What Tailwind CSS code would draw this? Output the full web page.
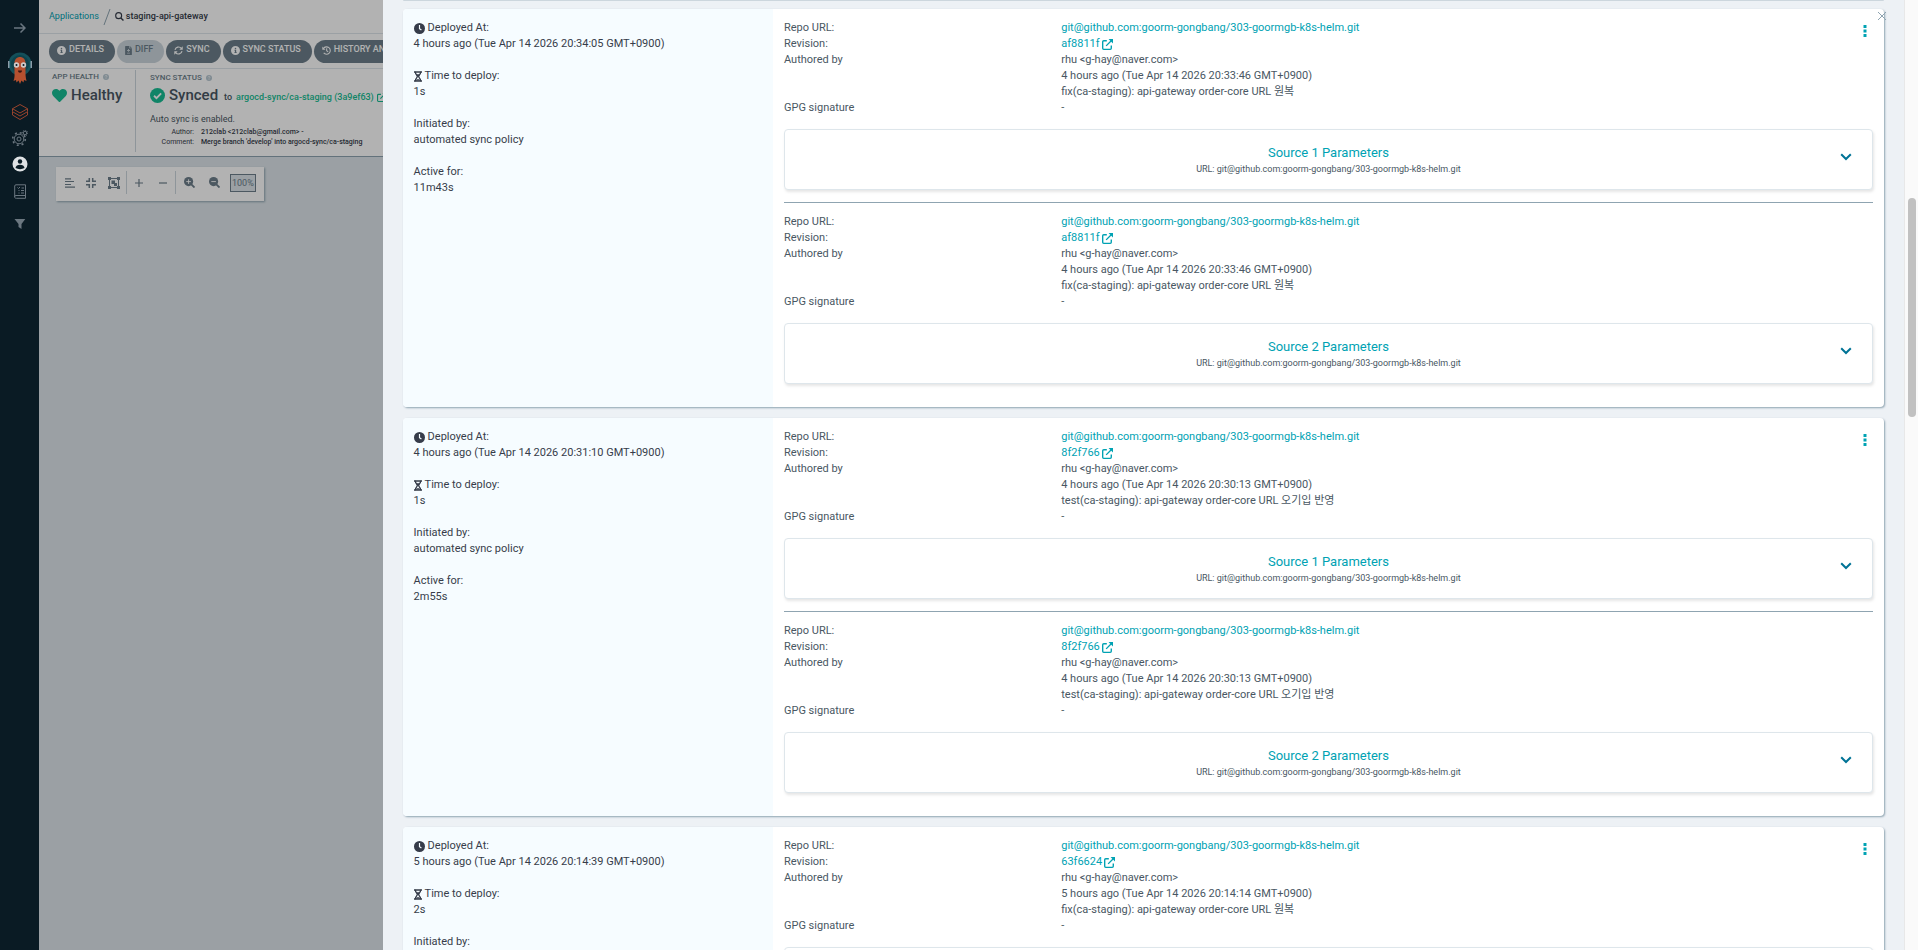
<!DOCTYPE html>
<html lang="en">

<head>
    <meta charset="UTF-8">
    <meta name="viewport" content="width=device-width, initial-scale=1.0">
    <title>staging-api-gateway - Argo CD</title>

    <script src="https://cdn.jsdelivr.net/npm/@tailwindcss/browser@4"></script>
</head>

<body class="h-screen overflow-hidden font-[Roboto,'Noto_Sans_CJK_KR',sans-serif] text-[#363c4a]">
    <!-- icon set -->
    <svg class="hidden" xmlns="http://www.w3.org/2000/svg">
        <symbol id="i-info" viewBox="0 0 16 16">
            <path fill="currentColor" fill-rule="evenodd" d="M8 0a8 8 0 100 16A8 8 0 008 0zm0 3a1.4 1.4 0 110 2.800A1.400 1.400 0 018 3zM6.200 6.800h3v4h.8v1.500H6.200v-1.500H7V8.300h-.8z" />
        </symbol>
        <symbol id="i-help" viewBox="0 0 16 16">
            <circle cx="8" cy="8" r="8" fill="currentColor" />
            <path d="M5.500 6.300C5.700 3.200 10.600 3.200 10.500 6.200 10.500 7.800 8 7.800 8 9.700M8 11v2" fill="none" stroke="#fff" stroke-width="1.800" />
        </symbol>
        <symbol id="i-diff" viewBox="0 0 12 16">
            <path fill="currentColor" fill-rule="evenodd" d="M1 0h6v4h5v11a1 1 0 01-1 1H1a1 1 0 01-1-1V1a1 1 0 011-1zM8 0l4 3H8zM5.200 5.500v1.700H3.500v1.500h1.700v1.700h1.600V8.700h1.700V7.200H6.800V5.500zM3.500 12v1.400h5V12z" />
        </symbol>
        <symbol id="i-sync" viewBox="0 0 16 16">
            <path d="M1.800 7A6.300 6.300 0 0113 4.200M14.200 9A6.300 6.300 0 013 11.800" fill="none" stroke="currentColor" stroke-width="2" />
            <path d="M15.500.5v6h-6zM.5 15.500v-6h6z" fill="currentColor" />
        </symbol>
        <symbol id="i-history" viewBox="0 0 16 16">
            <path d="M2.600 4.500A6.600 6.600 0 113 12.300M8.300 4.200v4.200l2.700 2" fill="none" stroke="currentColor" stroke-width="1.900" />
            <path d="M.5 1v5.700h5.700z" fill="currentColor" />
        </symbol>
        <symbol id="i-search" viewBox="0 0 16 16">
            <path d="M10.500 10.500L15 15" fill="none" stroke="currentColor" stroke-width="2.400" />
            <circle cx="6.500" cy="6.500" r="5.300" fill="none" stroke="currentColor" stroke-width="2" />
        </symbol>
        <symbol id="i-heart" viewBox="0 0 512 512">
            <path fill="currentColor" d="M462.300 62.600C407.500 15.900 326 24.300 275.700 76.200L256 96.500l-19.700-20.300C186.100 24.300 104.500 15.900 49.700 62.600c-62.800 53.600-66.100 149.800-9.900 207.900l193.500 199.800c12.500 12.900 32.800 12.900 45.300 0l193.500-199.800c56.300-58.100 53-154.300-9.800-207.900z" />
        </symbol>
        <symbol id="i-check" viewBox="0 0 16 16">
            <circle cx="8" cy="8" r="8" fill="currentColor" />
            <path d="M4.300 8.300l2.600 2.500 5-5" fill="none" stroke="#fff" stroke-width="2" />
        </symbol>
        <symbol id="i-external" viewBox="0 0 16 16">
            <path d="M7 2.500H2.500A1.500 1.500 0 001 4v9.500A1.500 1.500 0 002.500 15H12a1.500 1.500 0 001.500-1.500V9.500M6 10l7.500-7.500" fill="none" stroke="currentColor" stroke-width="2" />
            <path d="M9.500 0H16v6.500z" fill="currentColor" />
        </symbol>
        <symbol id="i-clock" viewBox="0 0 16 16">
            <circle cx="8" cy="8" r="8" fill="currentColor" />
            <path d="M8 3v5.300l2.800 2" fill="none" stroke="#f6fcff" stroke-width="1.700" />
        </symbol>
        <symbol id="i-hourglass" viewBox="0 0 12 16">
            <path d="M0 1.200h12M0 14.800h12" stroke="currentColor" stroke-width="2.400" />
            <path d="M2 1c0 4.500 3 5 3 7s-3 2.500-3 7M10 1c0 4.500-3 5-3 7s3 2.500 3 7" fill="none" stroke="currentColor" stroke-width="2" />
            <path d="M3 4.500h6L6 9zM3 14c0-2.500 6-2.500 6 0z" fill="currentColor" />
        </symbol>
        <symbol id="i-kebab" viewBox="0 0 4 12">
            <path fill="currentColor" d="M.5 0h3v3h-3zM.5 4.500h3v3h-3zM.5 9h3v3h-3z" />
        </symbol>
        <symbol id="i-chevron" viewBox="0 0 12 8">
            <path d="M1.200 1.200L6 6l4.800-4.800" fill="none" stroke="currentColor" stroke-width="2" />
        </symbol>
    </svg>

    <div class="flex h-full">
        <nav class="flex w-[39px] shrink-0 flex-col items-center bg-[#0a1b24] pt-5 text-[#6b7780]">
            <button aria-label="Expand" class="flex h-4 items-center">
                <svg class="h-3 w-3" viewBox="0 0 12 12" fill="none" stroke="currentColor" stroke-width="1.500"><path d="M0 6h11M6.500 1.500L11 6l-4.500 4.500" /></svg>
            </button>
            <svg class="mt-4 h-8 w-6" viewBox="0 0 24 32">
                <circle cx="12" cy="12" r="11.500" fill="#14505a" />
                <circle cx="12" cy="12" r="9" fill="#0d434d" />
                <path d="M0 9h1.500v7H0zM22.500 9H24v7h-1.500z" fill="#8b9da9" />
                <path d="M6.500 11c0-8 11-8 11 0v8c0 4 0 6 1 10l-2.500-1-.5 2.500-2-2-1.500 3.500-1.500-3.500-2 2-.5-2.500-2.500 1c1.500-4 1-6 1-10z" fill="#b5502f" />
                <circle cx="8.500" cy="13" r="2.700" fill="#d0cccb" />
                <circle cx="15.500" cy="13" r="2.700" fill="#d0cccb" />
                <circle cx="8.500" cy="13" r="1" fill="#0a1b24" />
                <circle cx="15.500" cy="13" r="1" fill="#0a1b24" />
                <path d="M10 18.500h4c0 3-4 3-4 0z" fill="#3b1511" />
            </svg>
            <a href="#" aria-label="Applications" class="mt-5">
                <svg class="h-4 w-4" viewBox="0 0 16 16" fill="none" stroke="#99442d" stroke-width="1"><path d="M8 .5l7.500 4.200L8 9 .5 4.700zM.5 4.700v3L8 12l7.500-4.300v-3M.5 8v3L8 15.500l7.500-4.500V8" /></svg>
            </a>
            <a href="#" aria-label="Settings" class="mt-2.5">
                <svg class="h-4 w-4" viewBox="0 0 16 16" fill="none" stroke="currentColor">
                    <circle cx="7" cy="9" r="4.800" />
                    <circle cx="7" cy="9" r="6.300" stroke-width="1.600" stroke-dasharray="2 2.950" />
                    <circle cx="7" cy="9" r="2" />
                    <circle cx="13" cy="3" r="1.800" />
                    <circle cx="13" cy="3" r="2.700" stroke-width="1" stroke-dasharray="1 1.100" />
                </svg>
            </a>
            <a href="#" aria-label="User info" class="mt-2.5">
                <svg class="h-4 w-4" viewBox="0 0 16 16">
                    <circle cx="8" cy="8" r="7.500" fill="#dfe2e4" />
                    <circle cx="8" cy="5.500" r="2.200" fill="#0a1b24" />
                    <path d="M3.500 12c0-4.500 9-4.500 9 0-2.500 1.500-6.500 1.500-9 0z" fill="#0a1b24" />
                </svg>
            </a>
            <a href="#" aria-label="Documentation" class="mt-3">
                <svg class="h-4 w-4" viewBox="0 0 16 16" fill="none" stroke="currentColor"><path d="M4 .8h9.500v13.500H4.300C2 14.300 2 11.500 4 11.500h9.500M2.700 13V2C2.700 1.300 3.200.8 4 .8M5.500 3.500l1 1 1.500-1.500M9.500 4h2.500M6.500 6.500h1M9 6.500h3M9 9h3M6.500 9h1" /></svg>
            </a>
            <button aria-label="Filters" class="mt-4">
                <svg class="h-4 w-3" viewBox="0 0 12 14" fill="currentColor"><path d="M.5 2h10.800L7.500 7v5L4.500 10V7z" /></svg>
            </button>
        </nav>

        <main class="flex min-w-0 flex-1 flex-col bg-[#dee6eb]">
            <header class="flex h-[34px] shrink-0 items-center border-b border-[#dee6eb] bg-white px-2.5 text-[9px]">
                <a href="#" class="text-[#00a2b3]">Applications</a>
                <svg class="ml-1 h-4 w-2" viewBox="0 0 8 16" stroke="#8fa4b1"><path d="M1 16L7 0" /></svg>
                <svg class="mr-0.5 ml-1 h-[9px] w-[9px]"><use href="#i-search" /></svg>
                <span class="font-medium">staging-api-gateway</span>
            </header>
            <div class="flex h-[35px] shrink-0 items-center gap-0.5 overflow-hidden border-b border-[#dee6eb] bg-white px-2.5 text-[9px] font-medium whitespace-nowrap text-white">
                <button class="flex h-[23px] shrink-0 items-center gap-[3px] rounded-full bg-[#6d7f8b] pr-[11px] pb-0.5 pl-2"><svg class="h-[9px] w-[9px]"><use href="#i-info" /></svg>DETAILS</button>
                <button class="flex h-[23px] shrink-0 items-center gap-[3px] rounded-full bg-[#ccd6dd] pr-[11px] pb-0.5 pl-2 text-[#6d7f8b]" disabled><svg class="h-[9px] w-[7px]"><use href="#i-diff" /></svg>DIFF</button>
                <button class="flex h-[23px] shrink-0 items-center gap-[3px] rounded-full bg-[#6d7f8b] pr-[11px] pb-0.5 pl-2"><svg class="h-[9px] w-[9px]"><use href="#i-sync" /></svg>SYNC</button>
                <button class="flex h-[23px] shrink-0 items-center gap-[3px] rounded-full bg-[#6d7f8b] pr-[11px] pb-0.5 pl-2"><svg class="h-[9px] w-[9px]"><use href="#i-info" /></svg>SYNC STATUS</button>
                <button class="flex h-[23px] shrink-0 items-center gap-[3px] rounded-full bg-[#6d7f8b] pr-[11px] pb-0.5 pl-2"><svg class="h-[9px] w-[9px]"><use href="#i-history" /></svg>HISTORY AND ROLLBACK</button>
            </div>
            <section class="flex h-[88px] shrink-0 border-b border-[#8fa4b1] bg-white px-[13px] pt-px pb-1 text-[#363c4a]">
                <div class="w-[84px] shrink-0 border-r border-[#ccd6dd] pt-0.5">
                    <h2 class="flex items-center gap-1 text-[8px]/[10px] font-medium text-[#6d7f8b]">APP HEALTH <svg class="h-1.5 w-1.5 text-[#b7c7d1]"><use href="#i-help" /></svg></h2>
                    <p class="mt-1 flex items-center gap-1 text-[15px]/[18px] font-medium text-[#495763]"><svg class="h-[15px] w-[15px] text-[#18be94]"><use href="#i-heart" /></svg>Healthy</p>
                </div>
                <div class="pt-[3px] pl-3.5 whitespace-nowrap">
                    <h2 class="flex items-center gap-1 text-[8px]/[10px] font-medium text-[#6d7f8b]">SYNC STATUS <svg class="h-1.5 w-1.5 text-[#b7c7d1]"><use href="#i-help" /></svg></h2>
                    <p class="mt-[3px] flex items-center gap-1 text-[15px]/[18px] font-medium text-[#495763]">
                        <svg class="h-[15px] w-[15px] text-[#18be94]"><use href="#i-check" /></svg>Synced
                        <span class="flex items-center gap-1 pt-1 pl-0.5 text-[9px]/[14px]">to <a href="#" class="flex items-center gap-[3px] text-[#18be94]">argocd-sync/ca-staging (3a9ef63) <svg class="h-[9px] w-[9px]"><use href="#i-external" /></svg></a></span>
                    </p>
                    <p class="mt-2 text-[9px]/[14px] text-[#495763]">Auto sync is enabled.</p>
                    <dl class="mt-px grid grid-cols-[44px_auto] gap-x-[7px] text-[7px]/[10px] text-[#363c4a]">
                        <dt class="text-right">Author:</dt>
                        <dd class="font-medium">212clab &lt;212clab@gmail.com&gt; -</dd>
                        <dt class="text-right">Comment:</dt>
                        <dd class="font-medium">Merge branch 'develop' into argocd-sync/ca-staging</dd>
                    </dl>
                </div>
            </section>
            <div class="mt-2.5 ml-[17px] flex h-[34px] w-fit items-center bg-white px-2 pb-[3px] text-[#6d7f8b] shadow-[1px_1px_2px_#8fa4b1]">
                <button aria-label="Align" class="px-px"><svg class="h-2.5 w-2.5" viewBox="0 0 10 10" stroke="currentColor" stroke-width="1.200"><path d="M0 .8h6M0 3.500h9M0 6.500h6M0 9.200h10" /></svg></button>
                <button aria-label="Compact" class="ml-2.5"><svg class="h-2.5 w-2.5" viewBox="0 0 10 10" fill="none" stroke="currentColor" stroke-width="1.500"><path d="M0 3.300h3.300V0M10 3.300H6.700V0M0 6.700h3.300V10M10 6.700H6.700V10" /></svg></button>
                <button aria-label="Group" class="ml-3"><svg class="h-3 w-3" viewBox="0 0 12 12" fill="none" stroke="currentColor"><path d="M1.500 1.500h9v9h-9z" /><path d="M0 0h3v3H0zM9 0h3v3H9zM0 9h3v3H0zM9 9h3v3H9zM3.500 3.500h3.500V7H3.500zM6 6h3v3H6z" fill="currentColor" stroke="none" /></svg></button>
                <span class="mr-2 ml-1.5 h-[23px] w-px bg-[#ccd6dd]"></span>
                <button aria-label="Zoom in" class="mr-4"><svg class="h-2 w-2" viewBox="0 0 8 8" stroke="currentColor" stroke-width="1.200"><path d="M0 4h8M4 0v8" /></svg></button>
                <button aria-label="Zoom out"><svg class="h-2 w-2" viewBox="0 0 8 8" stroke="currentColor" stroke-width="1.200"><path d="M0 4h8" /></svg></button>
                <span class="mx-2 h-[23px] w-px bg-[#ccd6dd]"></span>
                <button aria-label="Enlarge" class="mr-3.5"><svg class="h-[11px] w-[11px]" viewBox="0 0 12 12"><path d="M7.500 7.500L11.500 11.500" stroke="currentColor" stroke-width="2" /><circle cx="5" cy="5" r="5" fill="currentColor" /><path d="M5 2.500v5M2.500 5h5" stroke="#fff" /></svg></button>
                <button aria-label="Shrink" class="mr-2.5"><svg class="h-[11px] w-[11px]" viewBox="0 0 12 12"><path d="M7.500 7.500L11.500 11.500" stroke="currentColor" stroke-width="2" /><circle cx="5" cy="5" r="5" fill="currentColor" /><path d="M2.500 5h5" stroke="#fff" /></svg></button>
                <span class="border border-[#6d7f8b] bg-[#dee6eb] px-px text-[9px]/[16px]">100%</span>
            </div>
        </main>
    </div>

    <!-- dimmed page behind the sliding panel -->
    <div class="absolute inset-y-0 right-0 left-[39px] bg-black/30"></div>

    <aside class="absolute inset-y-0 right-0 flex w-[calc(80%+1px)] bg-[#edf1f5]">
        <div class="min-w-0 flex-1 overflow-hidden px-5">
            <div class="mb-2 h-px rounded-b bg-[#ccd6dd]"></div>
            <div id="history" class="flex flex-col gap-[11px]"></div>
        </div>
        <button aria-label="Close" class="absolute top-3 right-8 text-[#8fa4b1]">
            <svg class="h-2 w-2" viewBox="0 0 8 8" stroke="currentColor"><path d="M0 0l8 8M8 0L0 8" /></svg>
        </button>
        <div class="flex w-3.5 shrink-0 justify-center border-l border-[#e8e8e8] bg-[#fafafa] pt-[198px]">
            <div class="h-[219px] w-2 rounded-full bg-[#c1c1c1]"></div>
        </div>
    </aside>

    <script type="text/javascript">
        const REPO = "git@github.com:goorm-gongbang/303-goormgb-k8s-helm.git";

        const deployments = [
            { at: "4 hours ago (Tue Apr 14 2026 20:34:05 GMT+0900)", took: "1s", active: "11m43s", rev: "af8811f", date: "4 hours ago (Tue Apr 14 2026 20:33:46 GMT+0900)", msg: "fix(ca-staging): api-gateway order-core URL 원복" },
            { at: "4 hours ago (Tue Apr 14 2026 20:31:10 GMT+0900)", took: "1s", active: "2m55s", rev: "8f2f766", date: "4 hours ago (Tue Apr 14 2026 20:30:13 GMT+0900)", msg: "test(ca-staging): api-gateway order-core URL 오기입 반영" },
            { at: "5 hours ago (Tue Apr 14 2026 20:14:39 GMT+0900)", took: "2s", active: "16m31s", rev: "63f6624", date: "5 hours ago (Tue Apr 14 2026 20:14:14 GMT+0900)", msg: "fix(ca-staging): api-gateway order-core URL 원복" },
        ];

        function source(d, n) {
            return `
                <dl class="grid grid-cols-[25%_1fr] gap-x-[5px] text-[#495763]">
                    <dt>Repo URL:</dt>
                    <dd><a href="#" class="text-[#00a2b3]">${REPO}</a></dd>
                    <dt>Revision:</dt>
                    <dd><a href="#" class="flex items-center gap-0.5 text-[#00a2b3]">${d.rev} <svg class="h-[11px] w-[11px]"><use href="#i-external" /></svg></a></dd>
                    <dt>Authored by</dt>
                    <dd>rhu &lt;g-hay@naver.com&gt;<br>${d.date}<br>${d.msg}</dd>
                    <dt>GPG signature</dt>
                    <dd>-</dd>
                </dl>
                <button class="mt-[13px] flex h-[61px] w-full items-center rounded-sm border border-[#dee6eb] bg-white px-5 shadow-[1px_2px_3px_rgba(0,0,0,0.1)]">
                    <span class="flex-1 pl-3">
                        <span class="block text-[13px]/[18px] text-[#00a2b3]">Source ${n} Parameters</span>
                        <span class="block text-[9px]/[14px] text-[#495763]">URL: ${REPO}</span>
                    </span>
                    <svg class="mb-1.5 h-2 w-3 text-[#007396]"><use href="#i-chevron" /></svg>
                </button>`;
        }

        document.getElementById("history").innerHTML = deployments.map((d) => `
            <article class="relative flex shrink-0 overflow-hidden rounded bg-white text-[11px]/[16px] shadow-[1px_1px_2px_#8fa4b1]">
                <div class="w-1/4 bg-[#f6fcff] px-[11px] pt-[11px]">
                    <p class="flex items-center gap-[3px]"><svg class="h-[11px] w-[11px]"><use href="#i-clock" /></svg>Deployed At:</p>
                    <p>${d.at}</p>
                    <p class="mt-4 flex items-center gap-[3px]"><svg class="h-[11px] w-2"><use href="#i-hourglass" /></svg>Time to deploy:</p>
                    <p>${d.took}</p>
                    <p class="mt-4">Initiated by:</p>
                    <p>automated sync policy</p>
                    <p class="mt-4">Active for:</p>
                    <p>${d.active}</p>
                </div>
                <div class="w-3/4 px-[11px] pt-[11px] pb-[23px]">
                    ${source(d, 1)}
                    <hr class="mt-3 mb-[11px] border-[#8fa4b1]">
                    ${source(d, 2)}
                </div>
                <button aria-label="Actions" class="absolute top-4 right-[17px] text-[#00a2b3]"><svg class="h-3 w-1"><use href="#i-kebab" /></svg></button>
            </article>`).join("");
    </script>
</body>

</html>
